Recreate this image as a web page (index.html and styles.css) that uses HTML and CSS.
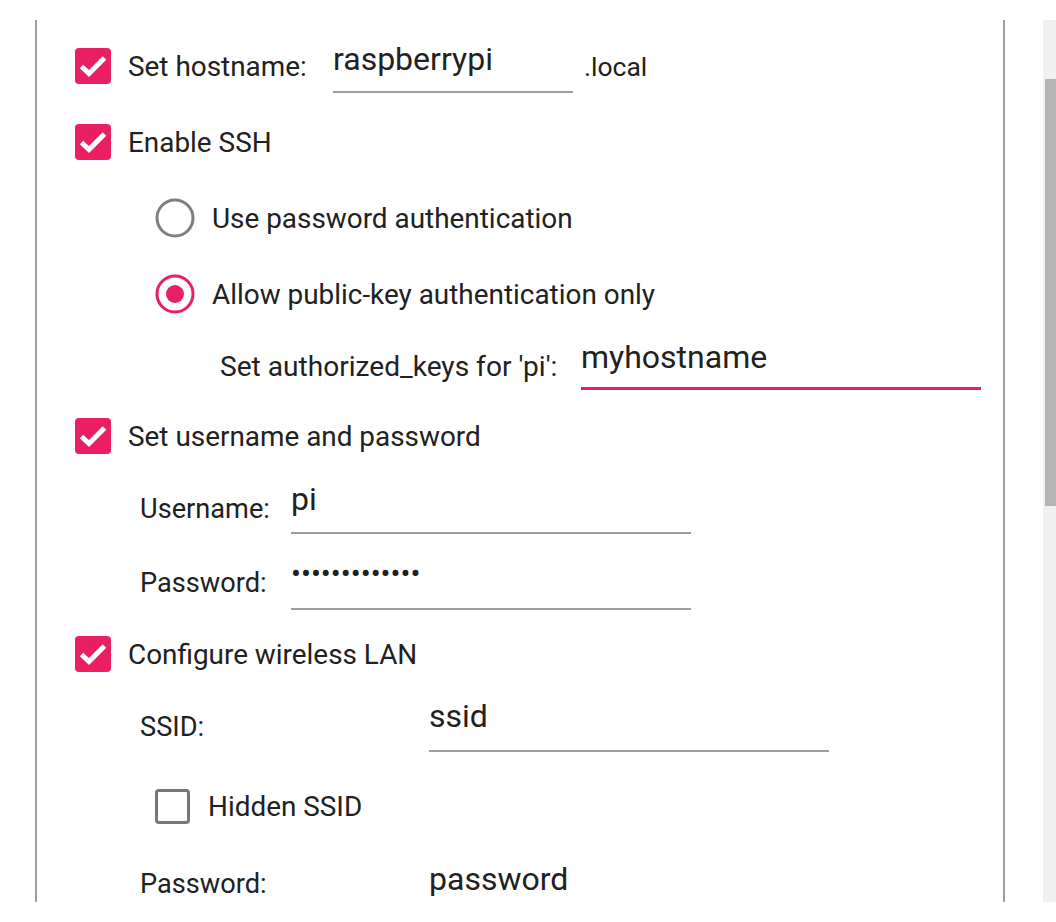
FILE: index.html
```html
<!DOCTYPE html>
<html>
<head>
<meta charset="utf-8">
<link rel="stylesheet" href="styles.css">
</head>
<body>
<div class="page">
  <div class="panel">
    <div class="content">
      <div class="row r-host">
        <span class="cb on"><svg viewBox="0 0 36 36"><polyline points="6.5,18.5 14,25.5 29.5,10"/></svg></span>
        <span class="label lbl-host">Set hostname:</span>
        <div class="field f-host">raspberrypi</div>
        <span class="label suffix">.local</span>
      </div>
      <div class="row r76">
        <span class="cb on"><svg viewBox="0 0 36 36"><polyline points="6.5,18.5 14,25.5 29.5,10"/></svg></span>
        <span class="label">Enable SSH</span>
      </div>
      <div class="row r76 indent-radio">
        <span class="radio"><svg viewBox="0 0 40 40"><circle cx="20" cy="20" r="18" class="ring-off"/></svg></span>
        <span class="label">Use password authentication</span>
      </div>
      <div class="row r76 indent-radio">
        <span class="radio"><svg viewBox="0 0 40 40"><circle cx="20" cy="20" r="18" class="ring-on"/><circle cx="20" cy="20" r="9" class="dot"/></svg></span>
        <span class="label">Allow public-key authentication only</span>
      </div>
      <div class="row r-auth">
        <span class="label auth lbl-auth">Set authorized_keys for 'pi':</span>
        <div class="field f-auth">myhostname</div>
      </div>
      <div class="row r-usercb">
        <span class="cb on"><svg viewBox="0 0 36 36"><polyline points="6.5,18.5 14,25.5 29.5,10"/></svg></span>
        <span class="label">Set username and password</span>
      </div>
      <div class="row r-user">
        <span class="label sub lbl-user">Username:</span>
        <div class="field f-user">pi</div>
      </div>
      <div class="row r-pass">
        <span class="label sub lbl-user">Password:</span>
        <div class="field f-pass"><span class="dots">•••••••••••••</span></div>
      </div>
      <div class="row r-wifi">
        <span class="cb on"><svg viewBox="0 0 36 36"><polyline points="6.5,18.5 14,25.5 29.5,10"/></svg></span>
        <span class="label">Configure wireless LAN</span>
      </div>
      <div class="row r-ssid">
        <span class="label sub lbl-ssid">SSID:</span>
        <div class="field f-ssid">ssid</div>
      </div>
      <div class="row r-hidden">
        <span class="cb off"></span>
        <span class="label">Hidden SSID</span>
      </div>
      <div class="row r-wpass">
        <span class="label sub lbl-ssid">Password:</span>
        <div class="field f-wpass">password</div>
      </div>
    </div>
  </div>
  <div class="scrollbar"><div class="thumb"></div></div>
</div>
</body>
</html>
```

FILE: styles.css
```css
html, body {
  margin: 0;
  padding: 0;
  background: #ffffff;
}
body {
  font-family: Roboto, "Liberation Sans", sans-serif;
  color: #212121;
}
.page {
  display: flex;
  height: 922px;
  box-sizing: border-box;
  padding: 20px 0 20px 35px;
  overflow: hidden;
}
.panel {
  width: 966px;
  flex: none;
  border-left: 2px solid #a0a0a0;
  border-right: 2px solid #a0a0a0;
  overflow: hidden;
}
.content {
  padding: 8px 0 0 38px;
}
.scrollbar {
  margin-left: 38px;
  width: 13px;
  flex: none;
  background: #f0f0f0;
  padding-top: 59px;
  box-sizing: border-box;
}
.thumb {
  margin-left: 2px;
  width: 11px;
  height: 427px;
  background: #b4b4b4;
}
.row {
  display: flex;
  align-items: center;
}
.r76 { height: 76px; }
.r-host { height: 76px; }
.r-auth { height: 68px; padding-left: 145px; }
.r-usercb { height: 72px; }
.r-user { height: 74px; padding-left: 65px; }
.r-pass { height: 74px; padding-left: 65px; }
.r-wifi { height: 68px; }
.r-ssid { height: 78px; padding-left: 65px; }
.r-hidden { height: 80px; padding-left: 80px; }
.r-wpass { height: 76px; padding-left: 65px; }
.indent-radio { padding-left: 80px; }

.label {
  font-size: 27.9px;
  white-space: nowrap;
}
.label.sub {
  font-size: 27.2px;
}
.label.auth {
  font-size: 28.1px;
}
.cb {
  width: 36px;
  height: 36px;
  flex: none;
  box-sizing: border-box;
  border-radius: 4px;
  margin-right: 17px;
}
.cb.on {
  background: #e91e63;
}
.cb.on svg {
  display: block;
  width: 36px;
  height: 36px;
}
.cb.on polyline {
  fill: none;
  stroke: #ffffff;
  stroke-width: 5;
}
.cb.off {
  width: 35px;
  height: 35px;
  border: 3px solid #777777;
  border-radius: 4px;
  margin-right: 18px;
}
.radio {
  width: 40px;
  height: 40px;
  flex: none;
  margin-right: 17px;
}
.radio svg {
  display: block;
  width: 40px;
  height: 40px;
}
.ring-off {
  fill: none;
  stroke: #7f7f7f;
  stroke-width: 3;
}
.ring-on {
  fill: none;
  stroke: #e91e63;
  stroke-width: 3;
}
.dot {
  fill: #e91e63;
}
.lbl-host { width: 205px; }
.lbl-auth { width: 361px; }
.lbl-user { width: 151px; }
.lbl-ssid { width: 289px; }
.label.suffix {
  margin-left: 11px;
  font-size: 26.5px;
}

.field {
  align-self: flex-start;
  font-size: 32px;
  line-height: 38px;
  border-bottom: 2px solid #9e9e9e;
  white-space: nowrap;
}
.f-host {
  width: 240px;
  margin-top: 12px;
  padding-bottom: 13px;
}
.f-auth {
  width: 400px;
  margin-top: 6px;
  padding-bottom: 11px;
  border-bottom: 3px solid #e91e63;
}
.f-user {
  width: 400px;
  margin-top: 8px;
  padding-bottom: 14px;
}
.f-pass {
  width: 400px;
  margin-top: 8px;
  padding-bottom: 15px;
}
.dots {
  font-size: 29.5px;
}
.f-ssid {
  width: 400px;
  margin-top: 9px;
  padding-bottom: 15px;
}
.f-wpass {
  width: 400px;
  margin-top: 14px;
  padding-bottom: 15px;
}
```
